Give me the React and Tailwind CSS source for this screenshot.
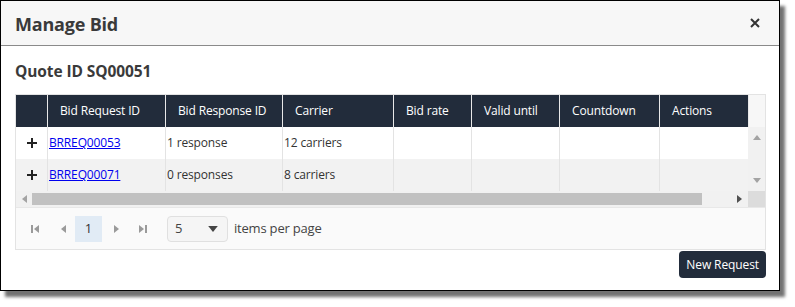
import React from 'react';

const cols = [
  { label: '', w: 'w-[31px]' },
  { label: 'Bid Request ID', w: 'w-[118px]' },
  { label: 'Bid Response ID', w: 'w-[117px]' },
  { label: 'Carrier', w: 'w-[111px]' },
  { label: 'Bid rate', w: 'w-[78px]' },
  { label: 'Valid until', w: 'w-[88px]' },
  { label: 'Countdown', w: 'w-[100px]' },
  { label: 'Actions', w: 'w-[89px]' },
];

const rows = [
  { id: 'BRREQ00053', responses: '1 response', carriers: '12 carriers' },
  { id: 'BRREQ00071', responses: '0 responses', carriers: '8 carriers' },
];

function Tri({ dir, className }) {
  const pts = {
    up: '0,5 4,0 8,5',
    down: '0,0 8,0 4,5',
    left: '5,0 5,8 0,4',
    right: '0,0 0,8 5,4',
  };
  const size = dir === 'up' || dir === 'down' ? { w: 8, h: 5 } : { w: 5, h: 8 };
  return (
    <svg width={size.w} height={size.h} viewBox={`0 0 ${size.w} ${size.h}`} className={className}>
      <polygon points={pts[dir]} fill="currentColor" />
    </svg>
  );
}

function PagerIcon({ kind }) {
  return (
    <svg width="10" height="10" viewBox="0 0 10 10" className="text-[#9a9a9a]">
      {kind === 'first' && (
        <>
          <rect x="1" y="1" width="2" height="8" fill="currentColor" />
          <polygon points="9,1 9,9 4,5" fill="currentColor" />
        </>
      )}
      {kind === 'prev' && <polygon points="7,1 7,9 2,5" fill="currentColor" />}
      {kind === 'next' && <polygon points="3,1 3,9 8,5" fill="currentColor" />}
      {kind === 'last' && (
        <>
          <polygon points="1,1 1,9 6,5" fill="currentColor" />
          <rect x="7" y="1" width="2" height="8" fill="currentColor" />
        </>
      )}
    </svg>
  );
}

export default function App() {
  return (
    <div className="w-[795px] h-[307px] bg-white" style={{ fontFamily: '"Open Sans", "Noto Sans", sans-serif' }}>
      <div className="w-[780px] h-[291px] border border-black bg-white shadow-[5px_6px_3px_rgba(0,0,0,0.55)] flex flex-col">
        {/* Header */}
        <div className="h-[45px] shrink-0 bg-[#f7f7f7] border-b border-[#8a8a8a] flex items-center justify-between pl-[14px] pr-[19px]">
          <h1 className="text-[18px] font-bold text-[#3a3a3a] tracking-[-0.2px] pt-[2px]">Manage Bid</h1>
          <svg width="10" height="10" viewBox="0 0 10 10">
            <path d="M1 1 L9 9 M9 1 L1 9" stroke="#333" strokeWidth="2" />
          </svg>
        </div>

        {/* Body */}
        <div className="px-[14px] flex flex-col">
          <h2 className="mt-[14px] text-[15.5px] font-bold text-[#3a3a3a] leading-[22px] tracking-[-0.1px]">Quote ID SQ00051</h2>

          <div className="mt-[12px] w-[751px] border border-[#e3e3e3] text-[12px] text-[#333] tracking-[-0.15px]">
            {/* column headers */}
            <div className="flex h-[32px]">
              {cols.map((c, i) => (
                <div
                  key={i}
                  className={`${c.w} shrink-0 bg-[#222c3b] text-white flex items-center px-[12px] ${i > 0 ? 'border-l border-[#e8e8e8]' : ''}`}
                >
                  {c.label}
                </div>
              ))}
              <div className="flex-1 bg-[#f7f7f7] border-l border-[#e8e8e8]" />
            </div>

            {/* rows + vertical scrollbar */}
            <div className="flex">
              <div className="flex flex-col">
                {rows.map((r, ri) => (
                  <div key={r.id} className={`flex h-[32px] ${ri === 1 ? 'bg-[#f2f2f2]' : 'bg-white'}`}>
                    <div className="w-[31px] shrink-0 flex items-center justify-center">
                      <svg width="10" height="10" viewBox="0 0 10 10">
                        <path d="M5 0 V10 M0 5 H10" stroke="#222" strokeWidth="2" />
                      </svg>
                    </div>
                    <div className="w-[118px] shrink-0 border-l border-[#e3e3e3] flex items-center px-[1px]">
                      <a href="#" className="text-[#0000ee] underline">{r.id}</a>
                    </div>
                    <div className="w-[117px] shrink-0 border-l border-[#e3e3e3] flex items-center px-[1px]">{r.responses}</div>
                    <div className="w-[111px] shrink-0 border-l border-[#e3e3e3] flex items-center px-[1px]">{r.carriers}</div>
                    <div className="w-[78px] shrink-0 border-l border-[#e3e3e3]" />
                    <div className="w-[88px] shrink-0 border-l border-[#e3e3e3]" />
                    <div className="w-[100px] shrink-0 border-l border-[#e3e3e3]" />
                    <div className="w-[89px] shrink-0 border-l border-[#e3e3e3]" />
                  </div>
                ))}
              </div>
              <div className="flex-1 bg-[#f1f1f1] flex flex-col items-center justify-between py-[8px] text-[#a3a3a3]">
                <Tri dir="up" />
                <Tri dir="down" />
              </div>
            </div>

            {/* horizontal scrollbar */}
            <div className="flex h-[16px]">
              <div className="flex-1 bg-[#f1f1f1] flex items-center">
                <div className="w-[16px] flex justify-center text-[#a3a3a3]"><Tri dir="left" /></div>
                <div className="w-[670px] h-[12px] bg-[#c1c1c1]" />
                <div className="flex-1 flex justify-end pr-[6px] text-[#505050]"><Tri dir="right" /></div>
              </div>
              <div className="w-[17px] bg-[#dcdcdc]" />
            </div>

            {/* pager */}
            <div className="h-[42px] bg-[#fafafa] border-t border-[#e8e8e8] flex items-center pl-[12px] text-[#444] tracking-normal">
              <div className="w-[14px] flex justify-center"><PagerIcon kind="first" /></div>
              <div className="w-[15px]" />
              <div className="w-[14px] flex justify-center"><PagerIcon kind="prev" /></div>
              <div className="ml-[4px] w-[27px] h-[26px] bg-[#e1ebf5] flex items-center justify-center text-[13px] text-[#333]">1</div>
              <div className="ml-[7px] w-[14px] flex justify-center"><PagerIcon kind="next" /></div>
              <div className="w-[13px]" />
              <div className="w-[14px] flex justify-center"><PagerIcon kind="last" /></div>
              <div className="ml-[17px] w-[61px] h-[26px] border border-[#e0e0e0] rounded-[4px] bg-[#f5f5f5] flex items-center justify-between pl-[7px] pr-[9px] text-[13px]">
                <span>5</span>
                <Tri dir="down" className="text-[#444] w-[10px] h-[6px]" />
              </div>
              <span className="ml-[6px] text-[13px] text-[#444] tracking-[-0.2px]">items per page</span>
            </div>
          </div>

          <div className="flex justify-end w-[751px]">
            <button className="mt-[1px] h-[27px] px-[7px] bg-[#222c3b] text-white text-[12px] rounded-[4px] tracking-[-0.1px]">New Request</button>
          </div>
        </div>
      </div>
    </div>
  );
}
